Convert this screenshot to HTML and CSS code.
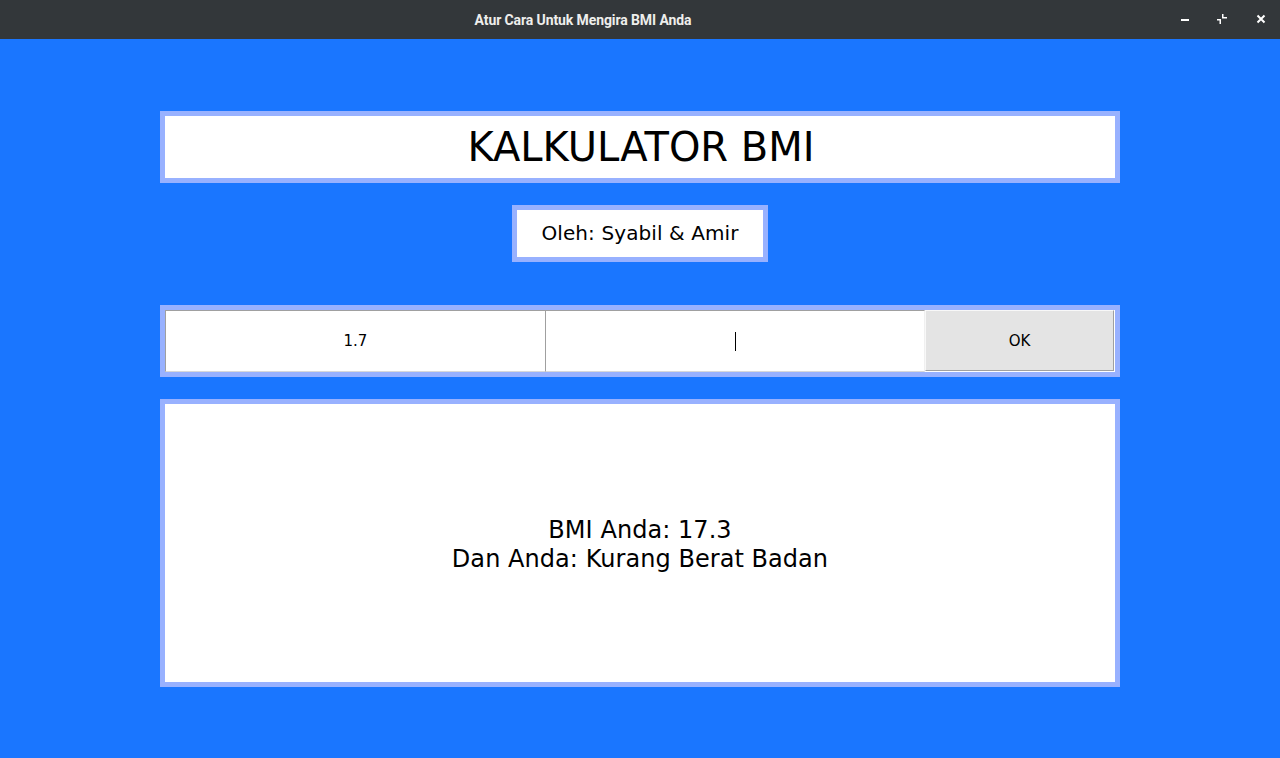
FILE: index.html
```
<!DOCTYPE html>
<html>
<head>
<meta charset="utf-8">
<link rel="stylesheet" href="styles.css">
</head>
<body>
<div class="titlebar">
  <div class="title">Atur Cara Untuk Mengira BMI Anda</div>
  <div class="controls">
    <svg class="ctl" width="12" height="12" viewBox="0 0 12 12"><rect x="2" y="6" width="8" height="2" fill="#fff"/></svg>
    <svg class="ctl" width="12" height="12" viewBox="0 0 12 12"><path d="M0 6h4v5h-1.5v-3.5h-2.5z M5 1h1.5v3h3.5v1.5h-5z" fill="#fff"/></svg>
    <svg class="ctl" width="12" height="12" viewBox="0 0 12 12"><path d="M2.5 2.5l7 7M9.5 2.5l-7 7" stroke="#fff" stroke-width="2"/></svg>
  </div>
</div>
<main class="app">
  <div class="panel heading">KALKULATOR BMI</div>
  <div class="panel credit">Oleh: Syabil &amp; Amir</div>
  <div class="panel inputs">
    <div class="entry">1.7</div>
    <div class="entry second"><span class="caret"></span></div>
    <div class="button">OK</div>
  </div>
  <div class="panel result">
    <div>BMI Anda: 17.3</div>
    <div>Dan Anda: Kurang Berat Badan</div>
  </div>
</main>
</body>
</html>
```
FILE: styles.css
```
* { box-sizing: border-box; }
html, body { margin: 0; padding: 0; }
body {
  width: 1280px;
  height: 758px;
  background: #1a76ff;
  font-family: "DejaVu Sans", sans-serif;
  color: #000;
  overflow: hidden;
}
.titlebar {
  height: 39px;
  background: #33373a;
  display: flex;
  align-items: center;
  justify-content: center;
  position: relative;
}
.title {
  font-family: Roboto, "Liberation Sans", sans-serif;
  font-weight: bold;
  font-size: 14px;
  letter-spacing: -0.1px;
  color: #eeeeec;
  margin-left: -114px;
}
.controls {
  position: absolute;
  right: 13px;
  top: 13px;
  display: flex;
  gap: 26px;
}
.ctl { display: block; }
.app {
  display: flex;
  flex-direction: column;
  align-items: center;
  padding-top: 72px;
}
.panel {
  border: 5px solid #98b1ff;
  background: #fff;
}
.heading {
  width: 960px;
  height: 72px;
  display: flex;
  align-items: center;
  justify-content: center;
  font-size: 40px;
  padding-left: 2px;
}
.credit {
  margin-top: 22px;
  width: 256px;
  height: 57px;
  display: flex;
  align-items: center;
  justify-content: center;
  font-size: 20px;
  letter-spacing: 0.1px;
  padding-bottom: 2px;
}
.inputs {
  margin-top: 43px;
  width: 960px;
  height: 72px;
  display: flex;
  background: #fff;
}
.entry {
  width: 380px;
  height: 62px;
  border-top: 1px solid #a0a0a0;
  border-left: 1px solid #a0a0a0;
  border-bottom: 1px solid #d8d8d8;
  display: flex;
  align-items: center;
  justify-content: center;
  font-size: 15px;
}
.entry.second { border-right: 1px solid #f0f0f0; }
.caret {
  display: block;
  width: 1px;
  height: 19px;
  background: #000;
}
.button {
  width: 189px;
  height: 61px;
  background: #e4e4e4;
  border-top: 1px solid #f8f8f8;
  border-left: 1px solid #f8f8f8;
  border-right: 1px solid #a0a0a0;
  border-bottom: 1px solid #a0a0a0;
  display: flex;
  align-items: center;
  justify-content: center;
  font-size: 15px;
}
.result {
  margin-top: 22px;
  width: 960px;
  height: 288px;
  display: flex;
  flex-direction: column;
  align-items: center;
  justify-content: center;
  font-size: 24px;
  line-height: 29px;
  letter-spacing: 0.05px;
  padding-top: 4px;
}
```
